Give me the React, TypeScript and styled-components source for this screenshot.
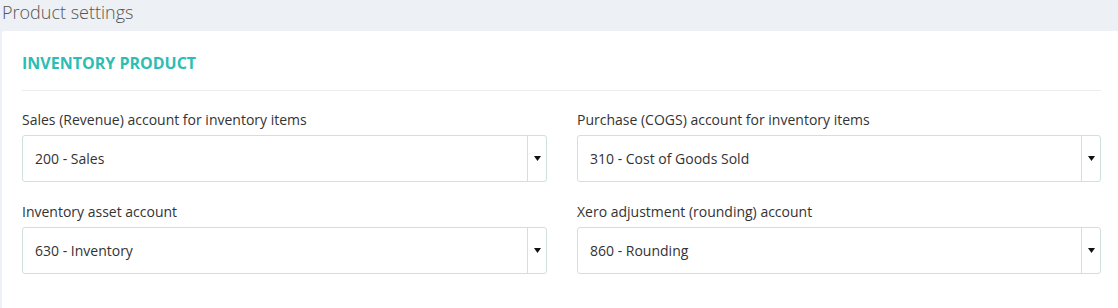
import styled, { createGlobalStyle } from 'styled-components';

const GlobalStyle = createGlobalStyle`
  html, body {
    margin: 0;
    padding: 0;
    background: #edf0f4;
  }

  body {
    font-family: 'Open Sans', 'Liberation Sans', sans-serif;
    color: #333;
  }
`;

interface AccountField {
  label: string;
  value: string;
}

const fields: AccountField[] = [
  { label: 'Sales (Revenue) account for inventory items', value: '200 - Sales' },
  { label: 'Purchase (COGS) account for inventory items', value: '310 - Cost of Goods Sold' },
  { label: 'Inventory asset account', value: '630 - Inventory' },
  { label: 'Xero adjustment (rounding) account', value: '860 - Rounding' },
];

const SelectBox = ({ value }: { value: string }) => (
  <Select>
    <span className="value">{value}</span>
    <ArrowCell>
      <svg width="7" height="5" viewBox="0 0 7 5">
        <path d="M0 0h7L3.5 5z" fill="#111" />
      </svg>
    </ArrowCell>
  </Select>
);

export default function App() {
  return (
    <>
      <GlobalStyle />
      <Page>
        <PageTitle>Product settings</PageTitle>
        <Card>
          <SectionHeader>INVENTORY PRODUCT</SectionHeader>
          <FieldGrid>
            {fields.map((field) => (
              <Field key={field.label}>
                <Label>{field.label}</Label>
                <SelectBox value={field.value} />
              </Field>
            ))}
          </FieldGrid>
        </Card>
      </Page>
    </>
  );
}

const Page = styled.div`
  width: 1118px;
  height: 308px;
  overflow: hidden;
`;

const PageTitle = styled.h1`
  margin: 0;
  height: 31px;
  padding-left: 2px;
  font-size: 18px;
  line-height: 24px;
  font-weight: 300;
  color: #555;
`;

const Card = styled.div`
  margin-left: 2px;
  padding: 0 17px 20px 20px;
  background: #fff;
  border-radius: 3px 0 0 0;
  min-height: 300px;
`;

const SectionHeader = styled.div`
  padding-top: 22px;
  height: 37px;
  line-height: 20px;
  border-bottom: 1px solid #ebedee;
  color: #2dbdb4;
  font-size: 16px;
  font-weight: 700;
`;

const FieldGrid = styled.div`
  display: grid;
  grid-template-columns: 525px 1fr;
  column-gap: 30px;
  row-gap: 21px;
  padding-top: 20px;
`;

const Field = styled.div`
  display: flex;
  flex-direction: column;
  gap: 6px;
`;

const Label = styled.label`
  font-size: 14px;
  line-height: 18px;
  color: #333;
`;

const Select = styled.div`
  display: flex;
  align-items: stretch;
  height: 47px;
  box-sizing: border-box;
  border: 1px solid #cfe0dd;
  border-radius: 3px;
  background: #fff;

  .value {
    flex: 1;
    display: flex;
    align-items: center;
    padding-left: 12px;
    font-size: 14px;
    color: #333;
  }
`;

const ArrowCell = styled.div`
  width: 18px;
  display: flex;
  align-items: center;
  justify-content: center;
  border-left: 1px solid #cfe0dd;
`;
